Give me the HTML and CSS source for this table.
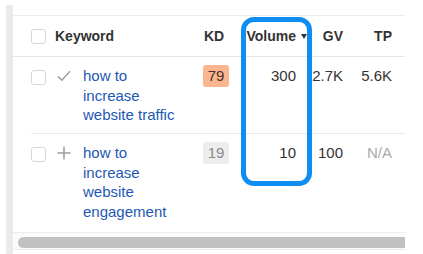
FILE: index.html
```html
<!DOCTYPE html>
<html>
<head>
<meta charset="utf-8">
<link rel="stylesheet" href="styles.css">
</head>
<body>
<div class="page">
  <div class="strip"></div>
  <div class="panel">
    <div class="row head">
      <span class="cb"></span>
      <span class="kw-head">Keyword</span>
      <span class="kd-head">KD</span>
      <span class="num-head vol-head">Volume<span class="caret"></span></span>
      <span class="num-head">GV</span>
      <span class="num-head">TP</span>
    </div>
    <div class="row body">
      <span class="cb"></span>
      <span class="kw">
        <svg class="ico" width="14" height="12" viewBox="0 0 14 12"><path d="M1 6.5 L4.8 10.2 L13 1.2" fill="none" stroke="#a0a0a0" stroke-width="1.6"/></svg>
        <a class="link">how to increase website traffic</a>
      </span>
      <span class="kd"><span class="badge hot">79</span></span>
      <span class="num">300</span>
      <span class="num">2.7K</span>
      <span class="num">5.6K</span>
    </div>
    <div class="sep"></div>
    <div class="row body last">
      <span class="cb"></span>
      <span class="kw">
        <svg class="ico" width="14" height="14" viewBox="0 0 14 14"><path d="M7 0.5 V13.5 M0.5 7 H13.5" fill="none" stroke="#a0a0a0" stroke-width="1.6"/></svg>
        <a class="link">how to increase website engagement</a>
      </span>
      <span class="kd"><span class="badge low">19</span></span>
      <span class="num">10</span>
      <span class="num">100</span>
      <span class="num na">N/A</span>
    </div>
    <div class="scroll"><div class="thumb"></div></div>
    <div class="highlight"></div>
  </div>
</div>
</body>
</html>
```

FILE: styles.css
```css
html, body {
  margin: 0;
  padding: 0;
  background: #fff;
}
body {
  font-family: "Liberation Sans", Arial, sans-serif;
  color: #333;
  width: 423px;
  height: 254px;
  overflow: hidden;
}
.page {
  display: flex;
  padding: 5px 0 0 6px;
  height: 249px;
}
.strip {
  width: 7px;
  background: #e9eaec;
}
.panel {
  position: relative;
  width: 392px;
  margin-top: 10px;
  border-top: 1px solid #ececec;
  align-self: flex-start;
}
.row {
  display: grid;
  grid-template-columns: 15px 9px 148px 26px 67px 47px 49px;
  padding: 0 13px 0 18px;
}
.row > .cb { grid-column: 1; }
.row > .kw, .row > .kw-head { grid-column: 3; }
.head {
  height: 40px;
  align-items: center;
  border-bottom: 1px solid #e6e6e6;
  font-weight: bold;
  font-size: 14px;
  color: #333;
}
.cb {
  box-sizing: border-box;
  width: 15px;
  height: 15px;
  border: 1px solid #d6d6d6;
  border-radius: 3px;
  background: #fff;
}
.kd-head {
  padding-left: 1px;
}
.num-head {
  text-align: right;
}
.vol-head {
  display: flex;
  justify-content: flex-end;
  align-items: center;
  margin-right: -11px;
}
.caret {
  width: 0;
  height: 0;
  border-left: 3.5px solid transparent;
  border-right: 3.5px solid transparent;
  border-top: 5px solid #333;
  margin-left: 5px;
  margin-top: 1px;
}
.body {
  padding-top: 9px;
  font-size: 15px;
  line-height: 19.5px;
  align-items: start;
}
.body > .cb {
  margin-top: 4px;
}
.body:not(.last) {
  height: 67px;
}
.last {
  height: 89px;
}
.kw {
  display: flex;
  align-items: flex-start;
}
.ico {
  flex: none;
  margin: 4px 12px 0 2px;
}
.last .ico {
  margin-top: 3px;
}
.link {
  color: #1d59b3;
  width: 98px;
}
.kd {
  display: flex;
}
.badge {
  display: block;
  width: 26px;
  height: 22px;
  line-height: 22px;
  text-align: center;
  border-radius: 3px;
  margin-top: -1px;
}
.hot {
  background: #fbb58f;
  color: #4a3328;
}
.low {
  background: #ededed;
  color: #8a8a8a;
}
.num {
  text-align: right;
  color: #333;
}
.na {
  color: #aaa;
}
.sep {
  height: 1px;
  margin-left: 18px;
  background: #e8e8e8;
}
.scroll {
  border-top: 1px solid #ececec;
  border-bottom: 1px solid #ececec;
  height: 18px;
  padding: 4px 0 0 5px;
  box-sizing: border-box;
  background: #fbfbfb;
  overflow: hidden;
}
.thumb {
  height: 11px;
  width: 400px;
  background: #c1c1c1;
  border-radius: 6px 0 0 6px;
}
.highlight {
  position: absolute;
  left: 228px;
  top: 1px;
  width: 71px;
  height: 169px;
  box-sizing: border-box;
  border: 5px solid #0e8ef2;
  border-radius: 13px;
}
```
